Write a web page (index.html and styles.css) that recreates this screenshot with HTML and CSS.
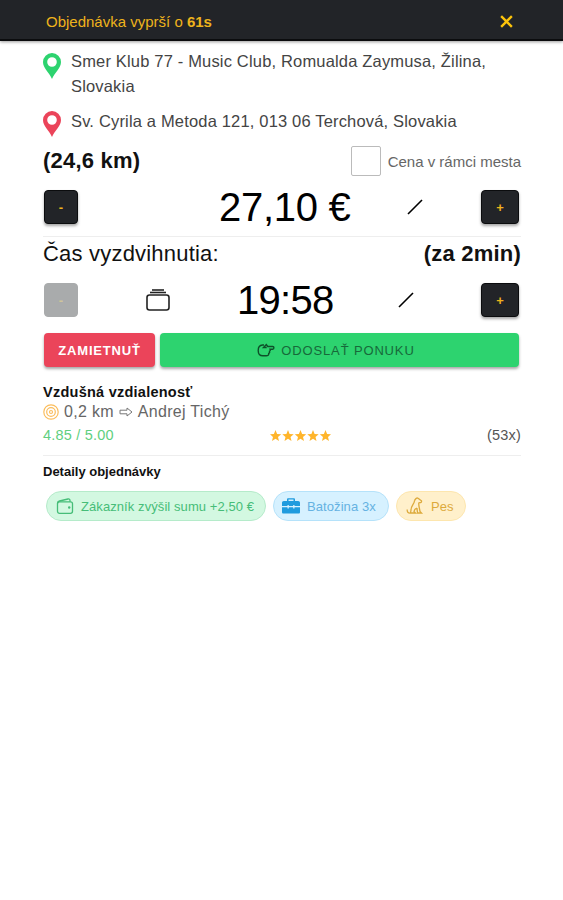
FILE: index.html
```html
<!DOCTYPE html>
<html lang="sk">

<head>
    <meta charset="utf-8">
    <title>Objednávka</title>
    <meta name="viewport" content="width=device-width, initial-scale=1">
    <link rel="stylesheet" href="styles.css">
</head>

<body>
    <header class="topbar">
        <span class="topbar-title">Objednávka vyprší o <b>61s</b></span>
        <svg class="close" viewBox="0 0 14 14"><path d="M2 2l10 10M12 2L2 12" /></svg>
    </header>

    <main class="order">
        <div class="address">
            <svg class="pin pin-from" viewBox="0 0 18 26"><path fill-rule="evenodd" d="M9 0a9 9 0 0 0-9 9c0 6 6 10 9 17 3-7 9-11 9-17a9 9 0 0 0-9-9zm0 4.200a4.800 4.800 0 1 1 0 9.600 4.800 4.800 0 0 1 0-9.600z" /></svg>
            <span>Smer Klub 77 - Music Club, Romualda Zaymusa, Žilina, Slovakia</span>
        </div>
        <div class="address">
            <svg class="pin pin-to" viewBox="0 0 18 26"><path fill-rule="evenodd" d="M9 0a9 9 0 0 0-9 9c0 6 6 10 9 17 3-7 9-11 9-17a9 9 0 0 0-9-9zm0 4.200a4.800 4.800 0 1 1 0 9.600 4.800 4.800 0 0 1 0-9.600z" /></svg>
            <span>Sv. Cyrila a Metoda 121, 013 06 Terchová, Slovakia</span>
        </div>

        <div class="distance">
            <span class="big-label">(24,6 km)</span>
            <label class="city"><span class="checkbox"></span>Cena v rámci mesta</label>
        </div>

        <div class="stepper price">
            <button class="btn minus">-</button>
            <span class="value">27,10 €</span>
            <svg class="pencil" viewBox="0 0 18 18"><path d="M2 16L16 2" /></svg>
            <button class="btn plus">+</button>
        </div>

        <div class="pickup">
            <span class="pickup-title">Čas vyzdvihnutia:</span>
            <span class="pickup-in">(za 2min)</span>
        </div>

        <div class="stepper time">
            <button class="btn minus disabled">-</button>
            <svg class="stack" viewBox="0 0 24 24"><rect x="1" y="7" width="22" height="15" rx="2.500" /><path d="M4 4.500h16" /><path d="M6 2h12" /></svg>
            <span class="value">19:58</span>
            <svg class="pencil" viewBox="0 0 18 18"><path d="M2 16L16 2" /></svg>
            <button class="btn plus">+</button>
        </div>

        <div class="actions">
            <button class="btn reject">ZAMIETNUŤ</button>
            <button class="btn send">
                <svg class="hand" viewBox="0 0 18 14"><path d="M7 2H5.500C2.800 2.200 1.200 4.500 1.200 7.500c0 3.300 1.800 5.300 4.600 5.300h3.400c1.700 0 2.700-.8 2.500-2.300.9-.4 1.200-1.300.8-2.200.8-.5 1-1.300.6-2.100h2.600c1.600 0 1.600-2.700 0-2.700h-5L9.300 1.600 6.500 4.500h3.200" /></svg>
                <span>ODOSLAŤ PONUKU</span>
            </button>
        </div>

        <h2 class="section air">Vzdušná vzdialenosť</h2>
        <div class="customer">
            <svg class="target" viewBox="0 0 16 16"><circle cx="8" cy="8" r="7.200" /><circle cx="8" cy="8" r="4.300" /><circle cx="8" cy="8" r="1.500" /></svg>
            <span>0,2 km</span>
            <svg class="arrow" viewBox="0 0 14 10"><path d="M1 3.200h7V1l5 4-5 4V6.800H1z" /></svg>
            <span>Andrej Tichý</span>
        </div>
        <div class="rating">
            <span class="score">4.85 / 5.00</span>
            <svg class="stars" viewBox="0 0 61 12">
                <defs><path id="star" d="M5.500 0l1.600 3.900 4.100.3L8 6.900l1 4.100-3.500-2.200L2 11l1-4.100L-.2 4.200l4.100-.3z" /></defs>
                <use href="#star" x="0" />
                <use href="#star" x="12.500" />
                <use href="#star" x="25" />
                <use href="#star" x="37.500" />
                <use href="#star" x="50" />
            </svg>
            <span class="count">(53x)</span>
        </div>

        <h2 class="section details">Detaily objednávky</h2>
        <div class="chips">
            <span class="chip chip-green">
                <svg viewBox="0 0 18 18"><rect x="1.500" y="4.800" width="15" height="11.500" rx="2" /><path d="M1.500 6.500c0-1.500.8-2.200 2-2.500l8.500-2c1.300-.3 2 .3 2 1.500v1.300" /><circle class="dot" cx="13.200" cy="10.500" r="1.200" /></svg>
                <span>Zákazník zvýšil sumu +2,50 €</span>
            </span>
            <span class="chip chip-blue">
                <svg viewBox="0 0 18 18"><path d="M5 4V2.500C5 1.700 5.500 1.200 6.300 1.200h5.400c.8 0 1.300.5 1.300 1.300V4h3.200c1 0 1.800.8 1.800 1.800V9h-5.500V8h-1.300v1H6.800V8H5.500v1H0V5.800C0 4.800.8 4 1.800 4zm1.500 0h5V2.600h-5zM0 10.200h5.500v1.300h1.300v-1.300h4.400v1.300h1.300v-1.300H18v5c0 .8-.6 1.300-1.300 1.300H1.300c-.7 0-1.300-.5-1.300-1.300z" /></svg>
                <span>Batožina 3x</span>
            </span>
            <span class="chip chip-yellow">
                <svg viewBox="0 0 18 18"><path d="M8.500 3.500L10 1.500c1-.8 2.500-.6 3 .5l2.500 1.800c.3 1.200-.5 1.900-1.700 1.900l-1 .3c-.3 3 .8 5.500 1.200 8.500l1.500 1.500h-4L11 11M8.500 3.500c.2 3-3.500 5-3.500 9.500L4.500 16h5l-1.500-1.500c.2-1.700 1-2.700 3-3.500M4.500 16C2 16.300 1 15 1.200 12.500" /></svg>
                <span>Pes</span>
            </span>
        </div>
    </main>
</body>

</html>
```
FILE: styles.css
```css
* {
    box-sizing: border-box;
}

body {
    margin: 0;
    background: #fff;
    color: #111;
    font-family: "Liberation Sans", Arial, sans-serif;
}

svg {
    display: block;
    flex: none;
    fill: none;
}

.topbar {
    display: flex;
    align-items: center;
    justify-content: space-between;
    height: 41px;
    padding: 3px 49px 0 46px;
    background: #222428;
    border-bottom: 2px solid #0b0c0e;
    box-shadow: 0 1px 3px rgba(0, 0, 0, 0.4);
    color: #eeb31c;
}

.topbar-title {
    font-size: 15px;
}

.close {
    width: 15px;
    height: 15px;
    stroke: #fcc30b;
    stroke-width: 2.2;
}

.order {
    padding: 8px 42px 0 43px;
}

.address {
    display: flex;
    gap: 10px;
    margin-bottom: 10px;
    font-size: 16.500px;
    line-height: 25px;
    letter-spacing: 0.170px;
    color: #444;
}

.pin {
    width: 18px;
    height: 26px;
    margin: 4px 0 -5px;
}

.pin-from {
    fill: #2dd36f;
}

.pin-to {
    fill: #eb445a;
    margin-top: 2px;
}

.distance {
    display: flex;
    align-items: center;
    justify-content: space-between;
    height: 30px;
    margin-top: 12px;
}

.big-label,
.pickup-in {
    font-size: 22px;
    font-weight: bold;
    letter-spacing: 0.200px;
}

.city {
    display: flex;
    align-items: center;
    gap: 7px;
    font-size: 15px;
    color: #666;
}

.checkbox {
    width: 30px;
    height: 30px;
    border: 1.500px solid #bbb;
    border-radius: 2px;
}

.stepper {
    display: grid;
    align-items: center;
    height: 34px;
    padding: 0 2px 0 1px;
}

.price {
    grid-template-columns: 34px 1fr 18px 57px 38px;
    margin-top: 14px;
}

.time {
    grid-template-columns: 34px 68px 24px 1fr 18px 66px 38px;
    margin-top: 16px;
}

.time .stack {
    grid-column: 3;
}

.value {
    font-size: 40px;
    line-height: 34px;
    letter-spacing: -0.300px;
    color: #000;
}

.price .value {
    padding-left: 141px;
}

.time .value {
    padding-left: 67px;
    letter-spacing: -0.700px;
}

.stepper .plus {
    grid-column: -2;
}

.pencil {
    width: 18px;
    height: 18px;
    stroke: #000;
    stroke-width: 1.6;
}

.stack {
    width: 24px;
    height: 24px;
    stroke: #222;
    stroke-width: 1.6;
}

.btn {
    height: 34px;
    padding: 0;
    border: 0;
    border-radius: 4px;
    background: #222428;
    box-shadow: 0 2px 3px rgba(0, 0, 0, 0.35);
    color: #eeb31c;
    font-family: inherit;
    font-size: 13px;
    font-weight: bold;
}

.stepper .btn {
    border: 1.500px solid #0b0c0e;
}

.stepper .disabled {
    background: #a9abac;
    border-color: #a9abac;
    box-shadow: none;
    color: #cfc59a;
}

.pickup {
    display: flex;
    align-items: center;
    justify-content: space-between;
    height: 31px;
    margin-top: 12px;
    border-top: 1px solid #eee;
    padding-top: 3px;
}

.pickup-title {
    font-size: 22px;
    letter-spacing: 0.200px;
}

.actions {
    display: flex;
    gap: 5px;
    margin: 16px 2px 0 1px;
}

.reject {
    width: 111px;
    background: #eb445a;
    color: #fff;
    letter-spacing: 0.800px;
}

.send {
    display: flex;
    align-items: center;
    justify-content: center;
    gap: 6px;
    flex: 1;
    padding-right: 7px;
    background: #2dd36f;
    color: #17693a;
    font-weight: normal;
    letter-spacing: 0.850px;
}

.hand {
    width: 18px;
    height: 14px;
    stroke: #0e4f29;
    stroke-width: 1.4;
}

.section {
    margin: 0;
    line-height: 18px;
}

.air {
    margin-top: 16px;
    font-size: 14.500px;
    letter-spacing: 0.250px;
}

.customer {
    display: flex;
    align-items: center;
    height: 22px;
    gap: 5px;
    font-size: 16px;
    letter-spacing: 0.300px;
    color: #666;
}

.target {
    width: 16px;
    height: 16px;
    stroke: #fbbd5c;
    stroke-width: 1.2;
}

.arrow {
    width: 14px;
    height: 10px;
    stroke: #777;
    stroke-width: 1;
}

.rating {
    display: grid;
    grid-template-columns: 227px 61px 1fr;
    align-items: center;
    height: 33px;
    padding-bottom: 9px;
    border-bottom: 1px solid #eee;
    font-size: 14.500px;
}

.score {
    color: #5fcf80;
    letter-spacing: 0.200px;
}

.stars {
    width: 61px;
    height: 12px;
    margin-top: 2px;
    fill: #ffb52b;
}

.count {
    justify-self: end;
    color: #555;
    letter-spacing: 0.200px;
}

.details {
    margin-top: 7px;
    font-size: 13px;
}

.chips {
    display: flex;
    gap: 7px;
    margin: 10px 3px 0;
}

.chip {
    display: flex;
    align-items: center;
    gap: 7px;
    height: 30px;
    padding: 0 9px;
    border: 1px solid;
    border-radius: 15px;
    font-size: 13px;
    letter-spacing: 0.080px;
    white-space: nowrap;
}

.chip svg {
    width: 18px;
    height: 18px;
    stroke: currentColor;
    stroke-width: 1.3;
}

.chip-green {
    width: 220px;
    background: #d3f8e1;
    border-color: #b5ebca;
    color: #46bd78;
}

.chip-green .dot {
    fill: currentColor;
    stroke: none;
}

.chip-blue {
    width: 116px;
    padding: 0 8px;
    background: #d6f1ff;
    border-color: #b5e2fa;
    color: #65b2e2;
}

.chip-blue svg {
    fill: #1f9bde;
    stroke: none;
}

.chip-yellow {
    width: 70px;
    background: #fff0cb;
    border-color: #fde6ae;
    color: #ddaa3c;
}
```
